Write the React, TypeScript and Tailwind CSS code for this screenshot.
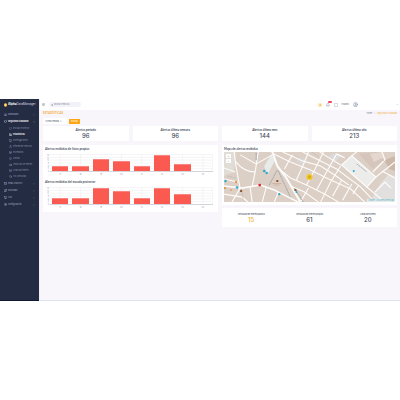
import type { ReactNode } from "react";
import {
  BarChart3,
  Bell,
  Box,
  Car,
  ChevronRight,
  CircleUser,
  Home,
  List,
  Mail,
  Maximize,
  Menu,
  Monitor,
  Route,
  Search,
  Settings,
  Shield,
  Sun,
  User,
} from "lucide-react";

type Icon = typeof Home;

const subItems: { label: string; icon: Icon; active?: boolean }[] = [
  { label: "Escudo Protector", icon: Shield },
  { label: "Estadísticas", icon: BarChart3, active: true },
  { label: "Investigaciones", icon: Monitor },
  { label: "Informe de vehículo", icon: User },
  { label: "Escenarios", icon: Box },
  { label: "Alertas", icon: Bell },
  { label: "Vehículos de interés", icon: Car },
  { label: "Listas de interés", icon: List },
  { label: "Tus consultas", icon: Search },
];

const lowerItems: { label: string; icon: Icon }[] = [
  { label: "Email Analytics", icon: Mail },
  { label: "Movilidad", icon: Route },
  { label: "VMI", icon: Monitor },
  { label: "Configuración", icon: Settings },
];

function NavItem({ label, icon: I, active = false }: { label: string; icon: Icon; active?: boolean }) {
  return (
    <a
      href="#"
      className={`flex h-[7px] items-center gap-px pr-1 pl-1 ${active ? "font-semibold text-white" : "text-[#a0aac0]"}`}
    >
      <I size={3} strokeWidth={3} />
      <span className="grow whitespace-nowrap">{label}</span>
      <ChevronRight size={2} strokeWidth={3} className={active ? "rotate-90" : ""} />
    </a>
  );
}

function Sidebar() {
  return (
    <aside className="w-[39px] shrink-0 overflow-hidden border-b border-[#111a33] bg-[#242c44] text-[2px] leading-[3px]">
      <div className="flex h-[11px] items-center gap-px pl-1 text-[3px] whitespace-nowrap text-[#d5d9e4]">
        <svg viewBox="0 0 6 8" className="h-1 w-[3px] shrink-0" aria-hidden="true">
          <path d="M3 0L6 2V6L3 8L0 6V2Z" fill="#f5ae2c" />
          <path d="M3 2V6M1.500 4H4.500" stroke="#fff4d6" strokeWidth="1" />
        </svg>
        <span>
          <b className="text-white">Alpha</b>DataManager
        </span>
      </div>
      <nav className="flex flex-col gap-px pt-px">
        <div>
          <NavItem label="Dashboard" icon={Home} />
          <NavItem label="Seguridad ciudadana" icon={Shield} active />
          {subItems.map(({ label, icon: I, active }) => (
            <a
              key={label}
              href="#"
              className={`flex h-[6px] items-center gap-px pl-[9px] whitespace-nowrap ${active ? "font-semibold text-white" : "text-[#8591aa]"}`}
            >
              <I size={3} strokeWidth={3} />
              {label}
            </a>
          ))}
        </div>
        <div>
          {lowerItems.map((i) => (
            <NavItem key={i.label} {...i} />
          ))}
        </div>
      </nav>
    </aside>
  );
}

function Header() {
  return (
    <header className="flex h-[11px] items-center gap-1 bg-white px-[2px] text-[#6b7280]">
      <button aria-label="Menú">
        <Menu size={3} strokeWidth={3} className="block" />
      </button>
      <label className="flex h-[5px] w-8 items-center gap-px rounded-full bg-[#f2f2f8] px-[2px]">
        <Search size={2} strokeWidth={3} className="shrink-0" />
        <input
          aria-label="Buscar vehículo"
          placeholder="Buscar vehículo..."
          className="w-full min-w-0 bg-transparent text-[2px] leading-[3px] placeholder:text-[#7d8597]"
        />
      </label>
      <div className="ml-auto flex items-center gap-1">
        <Sun size={4} strokeWidth={3} className="text-[#f7b52c]" />
        <div className="relative">
          <Bell size={4} strokeWidth={2} />
          <span className="absolute -top-[2px] left-[2px] h-[2px] w-[4px] rounded-full bg-[#f0435c]" />
        </div>
        <Maximize size={4} strokeWidth={2} />
        <span className="text-[2px] leading-[3px]">Español</span>
        <CircleUser size={5} strokeWidth={2} className="text-[#73849e]" />
      </div>
      <span className="w-9 text-right text-[2px] leading-[3px]">⌄</span>
    </header>
  );
}

function Stat({
  label,
  value,
  gold = false,
  small = false,
}: {
  label: string;
  value: number;
  gold?: boolean;
  small?: boolean;
}) {
  return (
    <div className="flex flex-col items-center justify-center bg-white text-[#454c5e]">
      <span
        className={`leading-[4px] whitespace-nowrap ${small ? "text-[2px] font-medium" : "font-['Lato','Open_Sans',sans-serif] text-[3px] font-bold"}`}
      >
        {label}
      </span>
      <strong className={`text-[6px] leading-[8px] font-medium ${gold ? "text-[#f5b335]" : ""}`}>{value}</strong>
    </div>
  );
}

function PanelTitle({ children }: { children: ReactNode }) {
  return (
    <h2 className="font-['Lato','Open_Sans',sans-serif] text-[3px] leading-[4px] font-bold text-[#4b5160]">
      {children}
    </h2>
  );
}

function BarChart({ title, values }: { title: string; values: number[] }) {
  return (
    <section>
      <div className="pl-[2px]">
        <PanelTitle>{title}</PanelTitle>
      </div>
      <div className="mt-[3px] flex pr-[5px]">
        <div className="flex h-[18px] w-[7px] flex-col justify-between pr-px text-right text-[2px] leading-[2px] text-[#a4a8b0]">
          {[18, 15, 12, 9, 6, 3, 0].map((t) => (
            <span key={t}>{t}</span>
          ))}
        </div>
        <div className="grow">
          <div className="relative h-[18px] border-b border-[#d4d4da]">
            <svg className="absolute inset-0 h-full w-full" viewBox="0 0 160 18" preserveAspectRatio="none" aria-hidden="true">
              <path
                d="M0 .5H160M0 3.500H160M0 6.500H160M0 9.500H160M0 12.500H160M0 15.500H160M10 0V18M30 0V18M50 0V18M70 0V18M90 0V18M110 0V18M130 0V18M150 0V18M159.500 0V18"
                fill="none"
                stroke="#f1f1f4"
                strokeWidth=".7"
              />
            </svg>
            <div className="relative grid h-full grid-cols-8 items-end">
              {values.map((v, i) => (
                <div
                  key={i}
                  className={`mx-[2px] bg-[#fb5a50] ${v ? "border-t border-[#f88580]" : ""}`}
                  style={{ height: `${v}%` }}
                />
              ))}
            </div>
          </div>
          <div className="grid grid-cols-8 pt-px text-center text-[2px] leading-[3px] text-[#8d9199]">
            {["17", "18", "19", "20", "21", "22", "23", "24"].map((d) => (
              <span key={d}>{d}</span>
            ))}
          </div>
        </div>
      </div>
    </section>
  );
}

function CityMap() {
  return (
    <div className="relative h-[50px] overflow-hidden">
      <svg viewBox="0 0 170 50" preserveAspectRatio="xMidYMid slice" className="h-full w-full" role="img" aria-label="Mapa de alertas">
        <rect width="170" height="50" fill="#dccfc5" />
        <path d="M0 0H12L10 20L0 24Z" fill="#e2dcd6" />
        <path d="M40 14L47 3L51 8L43 23Z" fill="#e7eceb" />
        <path d="M134 2L154 0L158 8L148 17Z" fill="#d5c5ba" />
        <path d="M145 2L158 0L160 5L149 10Z" fill="#e3d7ce" />
        <path d="M160 8L170 4V19L164 17Z" fill="#cdb7a8" />
        <path d="M155 32L164 22L170 25V50H145Z" fill="#e2e0df" />
        <path d="M104 4L111 1L116 5L110 10Z" fill="#dcdad8" />
        <path d="M72 9L77 5L81 8L77 13Z" fill="#d7d5d6" />
        <g fill="none" stroke="#fdfcfb" strokeWidth="1.100">
          <path d="M48 0L53 14L62 26L76 50" strokeWidth="2" />
          <path d="M0 34L18 36L36 33L50 38L62 44L74 50" strokeWidth="1.600" />
          <path d="M10 0C12 18 14 25 16 36L8 50M12 10C18 18 24 20 31 20M16 3L32 12L48 3M34 0L31 20L28 34M0 16L11 20M0 27L14 30" />
          <path d="M0 42L18 45L24 50M26 35L28 50M42 35L38 50M54 40L50 50" />
          <path d="M49 2L66 10L86 18L104 27L126 37L140 50" />
          <path d="M58 0L78 9L96 14L110 23L124 33" />
          <path d="M78 0L90 6L100 11L112 17L136 35L150 50" />
          <path d="M56 18L66 26L82 33L100 42L114 50" />
          <path d="M66 34L80 40L94 50M95 0L106 7L116 13" />
          <path d="M60 17L68 3M72 28L80 10L84 0M82 33L90 18L99 0M76 50L84 36M92 38L102 20L112 2M96 50L106 30L116 14M108 44L117 28M118 48L127 32M128 42L134 33" />
        </g>
        <path d="M117 13L127 4L151 25L142 35Z" fill="#ececeb" stroke="#fdfcfb" strokeWidth="1.200" />
        <g fill="none" stroke="#fdfcfb" strokeWidth="1.200">
          <path d="M112 2L120 6M127 4L132 0M148 20L160 8L157 0M151 25L170 10M142 35L160 50M157 19L170 26M150 40L160 30L166 36" />
        </g>
        <path d="M54 19L66 45M79 50L70 36M32 1V8M132 12L142 20M53 18L45 33" stroke="#8d919c" strokeWidth=".7" strokeDasharray="2 .5" fill="none" />
        <path d="M87 0L94 5M3 24L12 26M19 46L17 36M158 8L164 14" stroke="#b5b0ad" strokeWidth=".6" strokeDasharray="1.500 .5" fill="none" />
        <g fill="#2aa9cf">
          <circle cx="40" cy="19" r="1.300" />
          <circle cx="42.500" cy="21" r="1.200" />
          <circle cx="1.500" cy="29" r="1.200" />
          <circle cx="13" cy="35.500" r="1.200" />
          <circle cx="55" cy="42" r="1.200" />
          <circle cx="72" cy="40" r="1" />
          <circle cx="129" cy="19" r="1" />
        </g>
        <g fill="#e78b2f">
          <circle cx="12" cy="30" r="1.100" />
          <circle cx="1" cy="36" r="1" />
          <circle cx="7" cy="38" r=".8" />
        </g>
        <circle cx="35.500" cy="33" r="1.400" fill="#e5232d" />
        <path d="M52 28H54V30H52ZM70 37H72V39H70ZM16 38H18V40H16Z" fill="#8b5631" />
        <path d="M48 31.500H57M50 33H55" stroke="#c7a893" strokeWidth=".7" />
        <circle cx="85" cy="25" r="3" fill="#f4c822" />
        <circle cx="85" cy="25" r="1.400" fill="#d3a624" />
      </svg>
      <div className="absolute top-[2px] left-[2px] flex w-[5px] flex-col divide-y divide-[#ddd] bg-white text-center text-[3px] leading-[4px] text-[#777]">
        <button aria-label="Acercar">+</button>
        <button aria-label="Alejar">−</button>
      </div>
      <a href="#" className="absolute right-0 bottom-0 bg-[#e8ebea] px-px text-[2px] leading-[3px] whitespace-nowrap text-[#4fb0c4]">
        Leaflet | © OpenStreetMap
      </a>
    </div>
  );
}

function Panel({ className = "", children }: { className?: string; children: ReactNode }) {
  return <div className={`bg-white ${className}`}>{children}</div>;
}

export default function App() {
  return (
    <div className="flex min-h-screen flex-col justify-center bg-white font-['Inter','Open_Sans',sans-serif]">
      <div className="flex min-h-[202px]">
        <Sidebar />
        <div className="flex min-w-0 grow flex-col border-b border-l border-b-[#dbe4ee] border-l-[#f0f0f5] bg-[#f8f6fb]">
          <Header />
          <main className="px-[3px]">
            <div className="flex h-[6px] items-center justify-between">
              <h1 className="font-['Lato','Open_Sans',sans-serif] text-[3px] leading-[4px] font-bold text-[#f5b04c]">
                ESTADÍSTICAS
              </h1>
              <div className="flex gap-[2px] text-[2px] leading-[3px] text-[#777e8d]">
                <a href="#">Home</a>
                <span>/</span>
                <a href="#" className="text-[#f5b04c]">Seguridad ciudadana</a>
              </div>
            </div>
            <form className="flex h-[10px] items-center gap-[2px]" onSubmit={(e) => e.preventDefault()}>
              <select
                aria-label="Periodo"
                className="h-[6px] w-6 appearance-none bg-white px-[2px] text-[2px] leading-[3px] text-[#555c6c]"
              >
                <option>Última semana ⇕</option>
              </select>
              <button className="h-[5px] w-[11px] bg-[#fca815] text-[2px] leading-[3px] text-white">Buscar</button>
            </form>
            <div className="grid h-[15px] grid-cols-4 gap-1">
              <Stat label="Alertas periodo" value={96} />
              <Stat label="Alertas última semana" value={96} />
              <Stat label="Alertas último mes" value={144} />
              <Stat label="Alertas último año" value={213} />
            </div>
            <div className="mt-1 grid grid-cols-2 items-start gap-1">
              <Panel className="flex flex-col gap-1 pt-[2px] pb-[3px]">
                <BarChart title="Alertas recibidas de listas propias" values={[29, 29, 70, 56, 29, 97, 42, 0]} />
                <BarChart title="Alertas recibidas del escudo protector" values={[38, 38, 94, 76, 38, 97, 58, 0]} />
              </Panel>
              <div className="flex min-w-0 flex-col gap-[3px]">
                <Panel className="px-[2px] pt-[2px] pb-[3px]">
                  <div className="pb-px">
                    <PanelTitle>Mapa de alertas recibidas</PanelTitle>
                  </div>
                  <CityMap />
                </Panel>
                <Panel className="grid h-[19px] grid-cols-3">
                  <Stat label="Vehículos de interés público" value={15} gold small />
                  <Stat label="Vehículos de interés propios" value={61} small />
                  <Stat label="Listas de interés" value={20} small />
                </Panel>
              </div>
            </div>
          </main>
        </div>
      </div>
    </div>
  );
}
